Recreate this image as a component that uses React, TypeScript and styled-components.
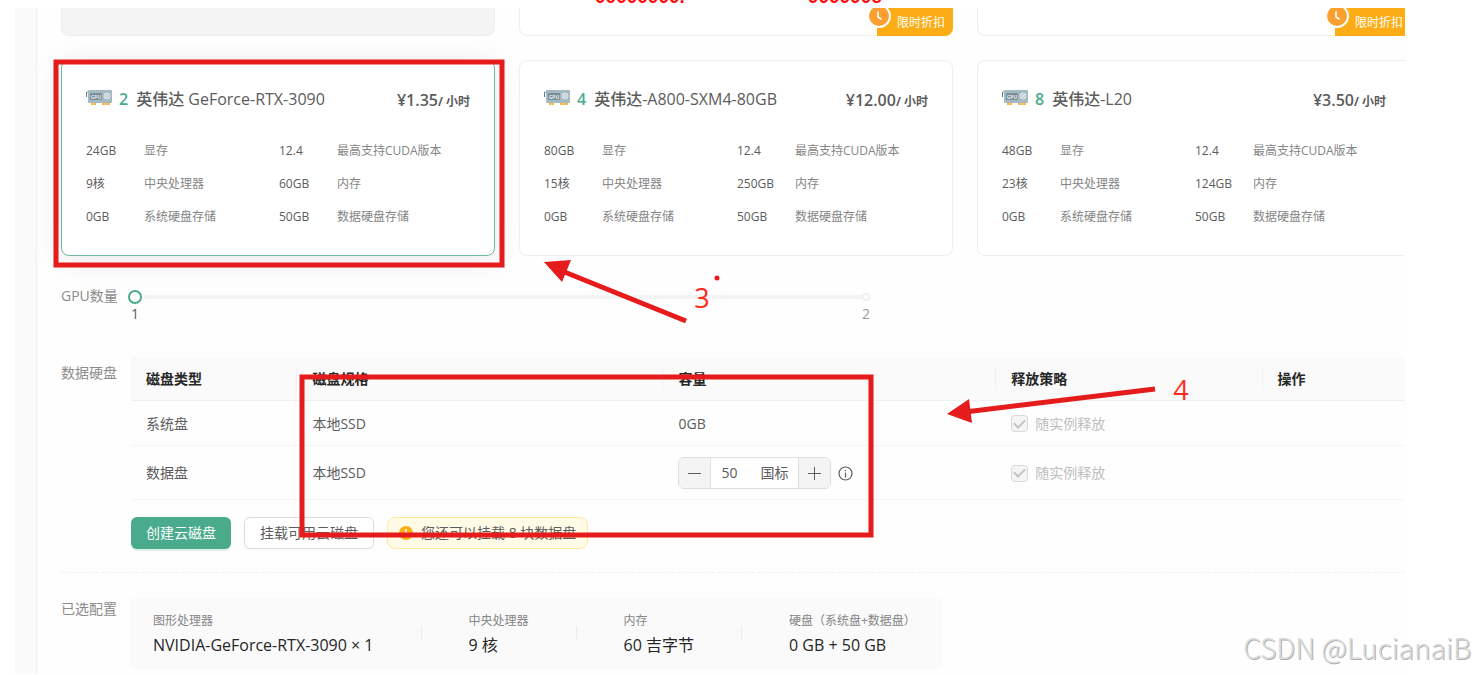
import React, { useState } from "react";
import styled, { createGlobalStyle } from "styled-components";

const GlobalStyle = createGlobalStyle`
  * { box-sizing: border-box; }
  body {
    margin: 0;
    background: #ffffff;
    color: #5c5c5c;
    font-family: "Open Sans", "Noto Sans CJK SC", sans-serif;
    font-size: 14px;
    line-height: 22px;
  }
  button, input { font: inherit; color: inherit; }
`;

const Page = styled.div`
  position: relative;
  overflow: hidden;
`;

const Serials = styled.div`
  display: flex;
  align-items: flex-end;
  gap: 123px;
  height: 8px;
  padding: 0 0 0 595px;
  overflow: hidden;
  color: #fb0d0d;
  font-family: "Liberation Sans", sans-serif;
  font-size: 19px;
  font-weight: 700;
  line-height: 22px;
  white-space: nowrap;
`;

const Frame = styled.div`
  display: flex;
  margin: 0 69px 0 15px;
`;

const Gutter = styled.div`
  flex: 0 0 22px;
  background: #fafafa;
  border-right: 1px solid #f0f0f0;
`;

const Content = styled.main`
  flex: 1;
  min-width: 0;
  padding: 0 0 5px 24px;
  overflow: hidden;
  background: #fefefe;
`;

const Bleed = styled.div`
  margin-right: -6px;
`;

const CardGrid = styled.div`
  display: grid;
  grid-template-columns: repeat(3, 1fr);
  gap: 24px;
`;

const CardEnd = styled.div<{ $disabled?: boolean }>`
  display: flex;
  justify-content: flex-end;
  height: 28px;
  border: 1px solid #eeeeee;
  border-top: 0;
  border-radius: 0 0 8px 8px;
  background: ${(p) => (p.$disabled ? "#f4f4f4" : "#ffffff")};
`;

const Discount = styled.div`
  position: relative;
  width: 76px;
  margin: 0 -1px -1px 0;
  padding: 3px 8px 0 20px;
  border-radius: 0 0 8px 0;
  background: #fcad15;
  color: #ffffff;
  font-size: 12px;
  line-height: 24px;
  white-space: nowrap;
`;

const ClockBadge = styled.svg`
  position: absolute;
  left: -11px;
  top: -5px;
`;

const Card = styled.article<{ $selected?: boolean }>`
  height: 196px;
  padding: 27px 24px 0;
  border: 1px solid ${(p) => (p.$selected ? "#6dbb9f" : "#eeeeee")};
  border-radius: 8px;
  background: #ffffff;
  box-shadow: ${(p) => (p.$selected ? "0 4px 32px rgba(0, 0, 0, 0.09)" : "none")};
`;

const CardHead = styled.header`
  display: flex;
  align-items: flex-start;
  height: 24px;
  margin-bottom: 28px;
  white-space: nowrap;
`;

const CardCount = styled.span`
  margin: 0 8px 0 7px;
  color: #4aab8c;
  font-size: 16px;
  font-weight: 600;
`;

const CardTitle = styled.h3`
  margin: 0;
  flex: 1;
  font-size: 16px;
  font-weight: 500;
`;

const Price = styled.span`
  font-size: 16px;
  font-weight: 600;
  line-height: 24px;
  small { font-size: 12px; font-weight: 700; }
`;

const Specs = styled.dl`
  display: grid;
  grid-template-columns: 58px 135px 58px 1fr;
  row-gap: 11px;
  margin: 0;
  font-size: 12px;
  white-space: nowrap;
`;

const SpecValue = styled.dt``;

const SpecName = styled.dd`
  margin: 0;
  color: #858585;
`;

const Field = styled.section`
  display: flex;
`;

const FieldLabel = styled.div<{ $low?: boolean }>`
  flex: 0 0 70px;
  padding-top: ${(p) => (p.$low ? 5 : 0)}px;
  color: #8c8c8c;
  white-space: nowrap;
`;

const SliderField = styled(Field)`
  margin-top: 29px;
  height: 72px;
`;

const SliderBox = styled.div`
  position: relative;
  flex: 0 1 751px;
  margin-left: -3px;
  padding-right: 6px;
`;

const Slider = styled.input`
  display: block;
  width: 100%;
  height: 14px;
  margin: 5px 0 0;
  appearance: none;
  background: linear-gradient(#f4f4f4, #f4f4f4) center / calc(100% - 14px) 4px no-repeat;
  &::-webkit-slider-thumb {
    appearance: none;
    width: 14px;
    height: 14px;
    border: 2px solid #4aab8c;
    border-radius: 50%;
    background: #ffffff;
  }
`;

const SliderStop = styled.span`
  position: absolute;
  right: 9px;
  top: 8px;
  width: 8px;
  height: 8px;
  border: 2px solid #f0f0f0;
  border-radius: 50%;
  background: #ffffff;
  pointer-events: none;
`;

const Marks = styled.div`
  display: flex;
  justify-content: space-between;
`;

const Mark = styled.span<{ $active?: boolean }>`
  width: 14px;
  text-align: center;
  line-height: 20px;
  color: ${(p) => (p.$active ? "#5c5c5c" : "#999999")};
`;

const DiskBody = styled.div`
  flex: 1;
  min-width: 0;
`;

const DiskTable = styled.table`
  width: 100%;
  table-layout: fixed;
  border-collapse: separate;
  border-spacing: 0;
`;

const Th = styled.th<{ $width: string }>`
  position: relative;
  width: ${(p) => p.$width};
  height: 44px;
  padding: 0 15px;
  border-bottom: 1px solid #f0f0f0;
  background: #fafafa;
  color: #262626;
  font-weight: 700;
  text-align: left;
  &:not(:last-child)::after {
    content: "";
    position: absolute;
    right: 0;
    top: 10px;
    width: 1px;
    height: 23px;
    background: #f0f0f0;
  }
`;

const Td = styled.td<{ $tall?: boolean }>`
  height: ${(p) => (p.$tall ? 54 : 45)}px;
  padding: 1px 15px 0;
  border-bottom: 1px solid #f4f4f4;
  white-space: nowrap;
`;

const CheckLabel = styled.label`
  display: flex;
  align-items: center;
  gap: 7px;
  color: #bfbfbf;
`;

const CheckBox = styled.input`
  appearance: none;
  display: grid;
  place-items: center;
  width: 17px;
  height: 17px;
  margin: 0;
  border: 1px solid #d9d9d9;
  border-radius: 4px;
  background: #f5f5f5;
  &:checked::after {
    content: "";
    width: 5px;
    height: 9px;
    margin-top: -3px;
    border: solid #c2c2c2;
    border-width: 0 2px 2px 0;
    transform: rotate(45deg);
  }
`;

const Capacity = styled.div`
  display: flex;
  align-items: center;
  gap: 7px;
`;

const Stepper = styled.div`
  display: flex;
  width: 153px;
  height: 32px;
  border: 1px solid #dedede;
  border-radius: 6px;
  overflow: hidden;
  background: #ffffff;
`;

const StepButton = styled.button<{ $side: "left" | "right" }>`
  flex: 0 0 32px;
  display: grid;
  place-items: center;
  padding: 0;
  border: 0 solid #dedede;
  border-right-width: ${(p) => (p.$side === "left" ? 1 : 0)}px;
  border-left-width: ${(p) => (p.$side === "right" ? 1 : 0)}px;
  background: #f4f4f4;
`;

const StepInput = styled.input`
  flex: 1;
  min-width: 0;
  padding: 0 0 0 10px;
  border: 0;
  outline: 0;
  background: transparent;
`;

const StepUnit = styled.span`
  padding-right: 10px;
  line-height: 30px;
`;

const Actions = styled.div`
  display: flex;
  gap: 13px;
  margin-top: 17px;
`;

const Button = styled.button<{ $primary?: boolean }>`
  height: 32px;
  padding: 0 15px;
  border: ${(p) => (p.$primary ? "0" : "1px solid #dcdcdc")};
  border-radius: 6px;
  background: ${(p) => (p.$primary ? "#4aab8c" : "#ffffff")};
  color: ${(p) => (p.$primary ? "#ffffff" : "#5c5c5c")};
  box-shadow: 0 2px 0 ${(p) => (p.$primary ? "#dff0ea" : "#fafafa")};
  white-space: nowrap;
`;

const Notice = styled.div`
  display: flex;
  align-items: center;
  gap: 8px;
  height: 32px;
  padding: 0 11px;
  border: 1px solid #ffe7a0;
  border-radius: 8px;
  background: #fffbe6;
  white-space: nowrap;
`;

const Divider = styled.hr`
  margin: 23px 0 25px;
  border: 0;
  border-top: 1px dashed #f0f0f0;
`;

const Summary = styled.div`
  display: flex;
  align-items: center;
  gap: 47px;
  height: 71px;
  margin-left: -2px;
  padding: 0 27px 2px 24px;
  border-radius: 6px;
  background: #fafafa;
  white-space: nowrap;
`;

const SummaryItem = styled.div`
  color: #262626;
  font-size: 16px;
  line-height: 25px;
  small {
    display: block;
    color: #858585;
    font-size: 12px;
  }
`;

const SummaryRule = styled.span`
  width: 1px;
  height: 14px;
  background: #ececec;
`;

const Annotations = styled.svg`
  position: absolute;
  left: 0;
  top: 0;
  pointer-events: none;
`;

const Watermark = styled.div`
  position: absolute;
  right: 3px;
  bottom: 7px;
  color: #dadada;
  font-family: "Noto Sans CJK SC", sans-serif;
  font-size: 28px;
  font-weight: 300;
  line-height: 40px;
  text-shadow: 1px 1px 0 #b0b0b0;
  white-space: nowrap;
`;

function GpuIcon() {
  return (
    <svg width="26" height="17" viewBox="0 0 26 17" aria-hidden="true">
      <path d="M0 4h1v5H0z" fill="#5f7583" />
      <path d="M1 3h2v2H1z" fill="#b7c6cd" />
      <rect x="2" y="2" width="24" height="13" rx="1" fill="#a5b9c3" />
      <rect x="4" y="5" width="12" height="7" rx="1" fill="#7b8d96" />
      <text x="10" y="10.500" textAnchor="middle" fontSize="5" fontWeight="700" fill="#e3eaee">GPU</text>
      <circle cx="21" cy="8" r="3" fill="#b9c9d1" stroke="#dde6ea" />
      <path d="M19 6l4 4M23 6l-4 4" stroke="#dde6ea" />
      <path d="M5 15h5v2H5zM16 15h8v2h-8z" fill="#f9b640" />
      <path d="M7.500 15v2M18.500 15v2M21.500 15v2" stroke="#fde3b0" strokeWidth="0.600" />
    </svg>
  );
}

function DiscountTag() {
  return (
    <Discount>
      限时折扣
      <ClockBadge width="26" height="26" viewBox="0 0 26 26" aria-hidden="true">
        <circle cx="13" cy="13" r="11" fill="#fba030" stroke="#ffffff" strokeWidth="2" />
        <path d="M12 9v5l3 2" fill="none" stroke="#ffffff" strokeWidth="1.600" strokeLinecap="round" />
      </ClockBadge>
    </Discount>
  );
}

const gpus = [
  { count: 2, name: "英伟达 GeForce-RTX-3090", price: "1.35", vram: "24GB", cores: "9核", memory: "60GB" },
  { count: 4, name: "英伟达-A800-SXM4-80GB", price: "12.00", vram: "80GB", cores: "15核", memory: "250GB" },
  { count: 8, name: "英伟达-L20", price: "3.50", vram: "48GB", cores: "23核", memory: "124GB" },
];

const columns = [
  ["磁盘类型", "13%"],
  ["磁盘规格", "28.6%"],
  ["容量", "26%"],
  ["释放策略", "20.8%"],
  ["操作", "11.6%"],
];

const summary = [
  ["图形处理器", "NVIDIA-GeForce-RTX-3090 × 1"],
  ["中央处理器", "9 核"],
  ["内存", "60 吉字节"],
  ["硬盘（系统盘+数据盘）", "0 GB + 50 GB"],
];

function ReleaseCheck() {
  return (
    <CheckLabel>
      <CheckBox type="checkbox" defaultChecked disabled />
      随实例释放
    </CheckLabel>
  );
}

export default function App() {
  const [size, setSize] = useState(50);
  const [gpuCount, setGpuCount] = useState(1);

  return (
    <Page>
      <GlobalStyle />
      <Serials>
        <span>00000000.</span>
        <span>000000c</span>
      </Serials>
      <Frame>
        <Gutter />
        <Content>
          <Bleed>
            <CardGrid>
              <CardEnd $disabled />
              <CardEnd><DiscountTag /></CardEnd>
              <CardEnd><DiscountTag /></CardEnd>
              {gpus.map((gpu, i) => (
                <Card key={gpu.name} $selected={i === 0}>
                  <CardHead>
                    <GpuIcon />
                    <CardCount>{gpu.count}</CardCount>
                    <CardTitle>{gpu.name}</CardTitle>
                    <Price>¥{gpu.price}<small>/ 小时</small></Price>
                  </CardHead>
                  <Specs>
                    <SpecValue>{gpu.vram}</SpecValue><SpecName>显存</SpecName>
                    <SpecValue>12.4</SpecValue><SpecName>最高支持CUDA版本</SpecName>
                    <SpecValue>{gpu.cores}</SpecValue><SpecName>中央处理器</SpecName>
                    <SpecValue>{gpu.memory}</SpecValue><SpecName>内存</SpecName>
                    <SpecValue>0GB</SpecValue><SpecName>系统硬盘存储</SpecName>
                    <SpecValue>50GB</SpecValue><SpecName>数据硬盘存储</SpecName>
                  </Specs>
                </Card>
              ))}
            </CardGrid>

            <SliderField>
              <FieldLabel as="label" htmlFor="gpu-count">GPU数量</FieldLabel>
              <SliderBox>
                <SliderStop />
                <Slider id="gpu-count" type="range" min={1} max={2} value={gpuCount}
                  onChange={(e) => setGpuCount(Number(e.target.value))} />
                <Marks>
                  <Mark $active={gpuCount === 1}>1</Mark>
                  <Mark $active={gpuCount === 2}>2</Mark>
                </Marks>
              </SliderBox>
            </SliderField>

            <Field>
              <FieldLabel $low>数据硬盘</FieldLabel>
              <DiskBody>
                <DiskTable>
                  <thead>
                    <tr>{columns.map(([name, width]) => <Th key={name} $width={width}>{name}</Th>)}</tr>
                  </thead>
                  <tbody>
                    <tr>
                      <Td>系统盘</Td><Td>本地SSD</Td><Td>0GB</Td><Td><ReleaseCheck /></Td><Td />
                    </tr>
                    <tr>
                      <Td $tall>数据盘</Td>
                      <Td $tall>本地SSD</Td>
                      <Td $tall>
                        <Capacity>
                          <Stepper>
                            <StepButton $side="left" aria-label="减少" onClick={() => setSize(size - 1)}>
                              <svg width="15" height="15"><path d="M1 7.500h13" stroke="#5c5c5c" /></svg>
                            </StepButton>
                            <StepInput aria-label="容量" value={size}
                              onChange={(e) => setSize(Number(e.target.value) || 0)} />
                            <StepUnit>国标</StepUnit>
                            <StepButton $side="right" aria-label="增加" onClick={() => setSize(size + 1)}>
                              <svg width="15" height="15"><path d="M1 7.500h13M7.500 1v13" stroke="#5c5c5c" /></svg>
                            </StepButton>
                          </Stepper>
                          <svg width="15" height="15" viewBox="0 0 15 15" aria-hidden="true">
                            <circle cx="7.500" cy="7.500" r="6.500" fill="none" stroke="#5c5c5c" strokeWidth="1.200" />
                            <path d="M7.500 6.500v5M7.500 4v1.300" stroke="#5c5c5c" strokeWidth="1.200" />
                          </svg>
                        </Capacity>
                      </Td>
                      <Td $tall><ReleaseCheck /></Td>
                      <Td $tall />
                    </tr>
                  </tbody>
                </DiskTable>
                <Actions>
                  <Button $primary>创建云磁盘</Button>
                  <Button>挂载可用云磁盘</Button>
                  <Notice>
                    <svg width="14" height="14" viewBox="0 0 14 14" aria-hidden="true">
                      <circle cx="7" cy="7" r="7" fill="#faad14" />
                      <path d="M7 3v5M7 9.500v1.500" stroke="#ffffff" strokeWidth="1.500" />
                    </svg>
                    您还可以挂载 8 块数据盘
                  </Notice>
                </Actions>
              </DiskBody>
            </Field>

            <Divider />

            <Field>
              <FieldLabel>已选配置</FieldLabel>
              <Summary>
                {summary.map(([name, value], i) => (
                  <React.Fragment key={name}>
                    {i > 0 && <SummaryRule />}
                    <SummaryItem><small>{name}</small>{value}</SummaryItem>
                  </React.Fragment>
                ))}
              </Summary>
            </Field>
          </Bleed>
        </Content>
      </Frame>

      <Annotations width="1200" height="560" viewBox="0 0 1200 560" aria-hidden="true">
        <g fill="none" stroke="#e61b1b" strokeWidth="5">
          <rect x="56" y="62" width="446" height="203" />
          <rect x="302" y="377" width="569" height="158" />
          <path d="M686 321L562 271M1155 389L965 412" />
        </g>
        <path d="M544 262L571 260L562 282zM947 414L969 399L972 423z" fill="#e61b1b" />
        <circle cx="717" cy="278" r="2.500" fill="#e61b1b" />
        <g fill="#ff2a1a" fontSize="27" textAnchor="middle">
          <text x="702" y="308">3</text>
          <text x="1181" y="400">4</text>
        </g>
      </Annotations>
      <Watermark>CSDN @LucianaiB</Watermark>
    </Page>
  );
}
